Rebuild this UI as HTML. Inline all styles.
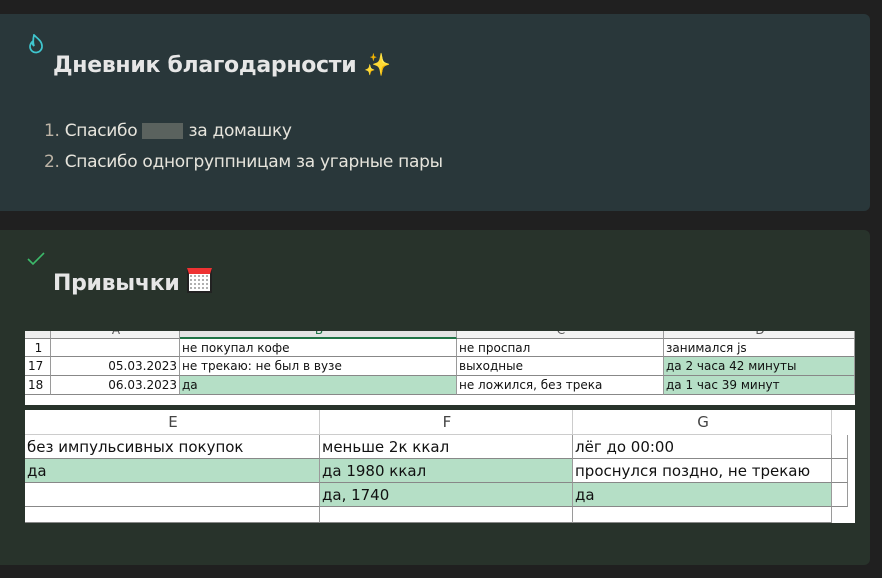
<!DOCTYPE html>
<html><head><meta charset="utf-8"><style>
*{margin:0;padding:0;box-sizing:border-box}
body{width:882px;height:578px;background:#202020;position:relative;overflow:hidden;font-family:"Liberation Sans","DejaVu Sans",sans-serif}
.card{position:absolute;left:0;width:870px;border-radius:0 6px 6px 0}
#c1{top:14px;height:197px;background:#29373a}
#c2{top:230px;height:335px;background:#28332b}
h2{position:absolute;left:53px;font-size:22px;font-weight:bold;color:#e6e6e6;font-family:"DejaVu Sans",sans-serif;letter-spacing:-0.3px}
.li{position:absolute;left:44px;font-size:17px;color:#e6e4dc;font-family:"DejaVu Sans",sans-serif;letter-spacing:-0.3px}
.li b{font-weight:normal;color:#bdb4a6}
.sheet{position:absolute;background:#fff;font-family:"DejaVu Sans",sans-serif;color:#111;overflow:hidden}
.c{position:absolute;border-right:1px solid #9a9a9a;border-bottom:1px solid #888;white-space:nowrap;overflow:hidden;padding-left:2px}
.g{background:#b5dfc6}
</style></head><body>
<div class="card" id="c1">
<svg style="position:absolute;left:27px;top:20px" width="18" height="20" viewBox="0 0 18 20"><path d="M7 1c3 3 8 6 8 11a6 6 0 0 1-12 1c0-2 1-4 2-5 0 2 1 3 2 4-1-3-1-7 0-11z" fill="none" stroke="#3fc6cf" stroke-width="1.7"/></svg>
<h2 style="top:39px">Дневник благодарности <span style="color:#ffe600">✨</span></h2>
<div class="li" style="top:107px"><b>1.</b> Спасибо <span style="display:inline-block;width:41px;height:16px;background:#5a625e;vertical-align:-3px"></span> за домашку</div>
<div class="li" style="top:138px"><b>2.</b> Спасибо одногруппницам за угарные пары</div>
</div>
<div class="card" id="c2">
<svg style="position:absolute;left:27px;top:22px" width="18" height="14" viewBox="0 0 18 14"><path d="M1 7l5 5L17 1" fill="none" stroke="#3cba6a" stroke-width="1.6"/></svg>
<h2 style="top:38px">Привычки <span style="display:inline-block;width:25px;height:25px;background:#fff;border:2px solid #222;border-top:6px solid #e33;vertical-align:-3px;background-image:radial-gradient(#aaa 1px,transparent 1.2px);background-size:4px 4px"></span></h2>
</div>
<div class="sheet" style="left:25px;top:331px;width:830px;height:74px;font-size:12px">
<div class="c" style="left:0;top:-8px;width:26px;height:16px;background:#eee"></div>
<div class="c" style="left:26px;top:-8px;width:129px;height:16px;background:#f2f2f2;text-align:center;color:#555">A</div>
<div class="c" style="left:155px;top:-8px;width:277px;height:16px;background:#e3e3e3;border-bottom:2px solid #217346;text-align:center;color:#217346">B</div>
<div class="c" style="left:432px;top:-8px;width:207px;height:16px;background:#f2f2f2;text-align:center;color:#555">C</div>
<div class="c" style="left:639px;top:-8px;width:191px;height:16px;background:#f2f2f2;text-align:center;color:#555">D</div>
<div class="c" style="left:0;top:8px;width:26px;height:18px;text-align:center;line-height:18px">1</div>
<div class="c" style="left:26px;top:8px;width:129px;height:18px"></div>
<div class="c" style="left:155px;top:8px;width:277px;height:18px;line-height:18px">не покупал кофе</div>
<div class="c" style="left:432px;top:8px;width:207px;height:18px;line-height:18px">не проспал</div>
<div class="c" style="left:639px;top:8px;width:191px;height:18px;line-height:18px">занимался js</div>
<div class="c" style="left:0;top:26px;width:26px;height:19px;line-height:19px;padding-left:3px">17</div>
<div class="c" style="left:26px;top:26px;width:129px;height:19px;line-height:19px;text-align:right;padding-right:2px">05.03.2023</div>
<div class="c" style="left:155px;top:26px;width:277px;height:19px;line-height:19px">не трекаю: не был в вузе</div>
<div class="c" style="left:432px;top:26px;width:207px;height:19px;line-height:19px">выходные</div>
<div class="c g" style="left:639px;top:26px;width:191px;height:19px;line-height:19px">да 2 часа 42 минуты</div>
<div class="c" style="left:0;top:45px;width:26px;height:19px;line-height:19px;padding-left:3px">18</div>
<div class="c" style="left:26px;top:45px;width:129px;height:19px;line-height:19px;text-align:right;padding-right:2px">06.03.2023</div>
<div class="c g" style="left:155px;top:45px;width:277px;height:19px;line-height:19px">да</div>
<div class="c" style="left:432px;top:45px;width:207px;height:19px;line-height:19px">не ложился, без трека</div>
<div class="c g" style="left:639px;top:45px;width:191px;height:19px;line-height:19px">да 1 час 39 минут</div>
</div>
<div class="sheet" style="left:25px;top:410px;width:830px;height:113px;font-size:15px">
<div class="c" style="left:0;top:0;width:295px;height:25px;text-align:center;line-height:25px;color:#444;border-color:#ccc">E</div>
<div class="c" style="left:295px;top:0;width:253px;height:25px;text-align:center;line-height:25px;color:#444;border-color:#ccc">F</div>
<div class="c" style="left:548px;top:0;width:259px;height:25px;text-align:center;line-height:25px;color:#444;border-color:#ccc">G</div>
<div class="c" style="left:0;top:25px;width:295px;height:24px;line-height:24px">без импульсивных покупок</div>
<div class="c" style="left:295px;top:25px;width:253px;height:24px;line-height:24px">меньше 2к ккал</div>
<div class="c" style="left:548px;top:25px;width:259px;height:24px;line-height:24px">лёг до 00:00</div>
<div class="c" style="left:807px;top:25px;width:16px;height:24px"></div>
<div class="c g" style="left:0;top:49px;width:295px;height:24px;line-height:24px">да</div>
<div class="c g" style="left:295px;top:49px;width:253px;height:24px;line-height:24px">да 1980 ккал</div>
<div class="c" style="left:548px;top:49px;width:259px;height:24px;line-height:24px">проснулся поздно, не трекаю</div>
<div class="c" style="left:807px;top:49px;width:16px;height:24px"></div>
<div class="c" style="left:0;top:73px;width:295px;height:24px"></div>
<div class="c g" style="left:295px;top:73px;width:253px;height:24px;line-height:24px">да, 1740</div>
<div class="c g" style="left:548px;top:73px;width:259px;height:24px;line-height:24px">да</div>
<div class="c" style="left:807px;top:73px;width:16px;height:24px"></div>
<div class="c" style="left:0;top:97px;width:295px;height:16px"></div>
<div class="c" style="left:295px;top:97px;width:253px;height:16px"></div>
<div class="c" style="left:548px;top:97px;width:259px;height:16px"></div>
</div>
</body></html>
